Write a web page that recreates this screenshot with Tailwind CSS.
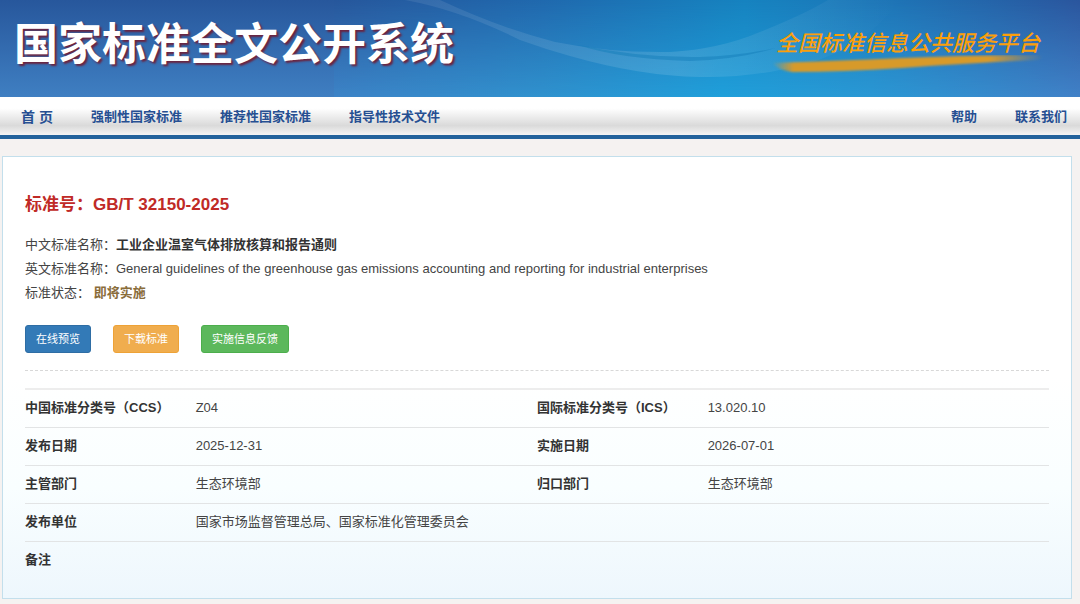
<!DOCTYPE html>
<html lang="zh-CN">
<head>
    <meta charset="UTF-8">
    <meta name="viewport" content="width=device-width, initial-scale=1.0">
    <title>国家标准全文公开系统</title>
    <script src="https://cdn.jsdelivr.net/npm/@tailwindcss/browser@4"></script>
</head>
<body class="bg-[#f5f2f1] min-h-screen font-['Liberation_Sans','Noto_Sans_CJK_SC',sans-serif] text-[13px] leading-6 text-[#444]">

    <!-- 页头 -->
    <header class="relative h-[97px] overflow-hidden">
        <svg class="absolute inset-0 w-full h-full" viewBox="0 0 1080 97" preserveAspectRatio="none" aria-hidden="true">
            <defs>
                <linearGradient id="left" x1="0" y1="0" x2="0" y2="1">
                    <stop offset="0" stop-color="#27579c"/>
                    <stop offset="1" stop-color="#3f7fc2"/>
                </linearGradient>
                <linearGradient id="top" x1="0" y1="0" x2="1" y2="0">
                    <stop offset="0" stop-color="#27579c"/>
                    <stop offset="0.28" stop-color="#2069ae"/>
                    <stop offset="0.55" stop-color="#1683c0"/>
                    <stop offset="0.75" stop-color="#1e74b6"/>
                    <stop offset="1" stop-color="#2b569e"/>
                </linearGradient>
                <linearGradient id="bottom" x1="0" y1="0" x2="1" y2="0">
                    <stop offset="0" stop-color="#3d84c7"/>
                    <stop offset="0.28" stop-color="#3092ce"/>
                    <stop offset="0.52" stop-color="#209fda"/>
                    <stop offset="0.72" stop-color="#2a98d4"/>
                    <stop offset="1" stop-color="#4181c7"/>
                </linearGradient>
                <linearGradient id="fade" x1="0" y1="0" x2="0" y2="1">
                    <stop offset="0" stop-color="#fff" stop-opacity="0"/>
                    <stop offset="1" stop-color="#fff"/>
                </linearGradient>
                <mask id="down"><rect width="1080" height="97" fill="url(#fade)"/></mask>
                <linearGradient id="wave" x1="0" y1="0" x2="1" y2="0">
                    <stop offset="0" stop-color="#fff" stop-opacity="0.08"/>
                    <stop offset="0.55" stop-color="#fff" stop-opacity="0.12"/>
                    <stop offset="1" stop-color="#fff" stop-opacity="0"/>
                </linearGradient>
            </defs>
            <rect width="334" height="97" fill="url(#left)"/>
            <rect x="334" width="746" height="97" fill="url(#top)"/>
            <g mask="url(#down)"><rect x="334" width="746" height="97" fill="url(#bottom)"/></g>
            <path d="M405 0H440Q500 28 555 42Q610 53 670 52Q720 49 760 32Q805 14 828 0H900Q860 56 780 70Q740 78 700 77Q640 76 570 56Q545 49 520 40Q460 10 405 0Z" fill="url(#wave)"/>
            <path d="M578 45Q640 58 700 57Q740 56 775 48Q740 59 690 61Q620 59 578 45Z" fill="#147db9" fill-opacity="0.5"/>
        </svg>
        <div class="relative flex h-full items-center justify-between pl-[14px] pr-[36px]">
            <h1 class="pb-2 text-[44px] leading-[60px] font-bold text-white [text-shadow:2px_2px_2px_#6b2440]">国家标准全文公开系统</h1>
            <div class="flex flex-col pt-1 text-[#fb9f0b]">
                <p class="px-1 font-['Noto_Sans_CJK_SC',sans-serif] text-[22px] leading-7 font-medium italic">全国标准信息公共服务平台</p>
                <svg class="h-5 w-full" viewBox="0 0 272 20" preserveAspectRatio="none" aria-hidden="true">
                    <defs>
                        <linearGradient id="brush" x1="0" y1="0" x2="1" y2="0">
                            <stop offset="0" stop-color="#d79a2c" stop-opacity="0"/>
                            <stop offset="0.08" stop-color="#d79a2c"/>
                            <stop offset="0.8" stop-color="#d79a2c"/>
                            <stop offset="1" stop-color="#d79a2c" stop-opacity="0"/>
                        </linearGradient>
                        <filter id="soft" x="-5%" y="-30%" width="110%" height="160%"><feGaussianBlur stdDeviation="1"/></filter>
                    </defs>
                    <path d="M0 8Q60 6 130 3Q200 0 270 0Q272 4 266 5Q200 8 130 13Q70 17 20 17Q6 15 0 8Z" fill="url(#brush)" filter="url(#soft)"/>
                </svg>
            </div>
        </div>
    </header>

    <!-- 导航 -->
    <nav class="flex h-[42px] items-center justify-between border-b-4 border-[#22629c] bg-linear-to-b from-white from-30% via-[#dadada] via-75% to-[#f4f4f4] pt-0.5 pl-[21px] pr-[13px] font-bold text-[#264f92]">
        <div class="flex items-center gap-[38px]">
            <a href="#" class="text-sm">首 页</a>
            <a href="#">强制性国家标准</a>
            <a href="#">推荐性国家标准</a>
            <a href="#">指导性技术文件</a>
        </div>
        <div class="flex items-center gap-[38px]">
            <a href="#">帮助</a>
            <a href="#">联系我们</a>
        </div>
    </nav>

    <!-- 标准详情 -->
    <main class="mt-[17px] mr-2 mb-[3px] ml-[2px] border border-[#c3dfec] bg-linear-to-b from-white from-50% via-[#f9feff] via-75% to-[#eef7fd] px-[22px] pt-9 pb-[19px]">
        <h2 class="text-[17px] font-bold text-[#c02a26]">标准号：GB/T 32150-2025</h2>

        <div class="mt-4">
            <p>中文标准名称：<strong class="text-[#333]">工业企业温室气体排放核算和报告通则</strong></p>
            <p>英文标准名称：General guidelines of the greenhouse gas emissions accounting and reporting for industrial enterprises</p>
            <p>标准状态： <strong class="text-[#8a6d3b]">即将实施</strong></p>
        </div>

        <div class="mt-5 flex gap-[22px] text-[11px] leading-[26px] text-white">
            <button type="button" class="rounded-[3px] border border-[#2e6da4] bg-[#337ab7] px-2.5">在线预览</button>
            <button type="button" class="rounded-[3px] border border-[#eea236] bg-[#f0ad4e] px-2.5">下载标准</button>
            <button type="button" class="rounded-[3px] border border-[#4cae4c] bg-[#5cb85c] px-2.5">实施信息反馈</button>
        </div>

        <hr class="my-[17px] border-dashed border-[#d8d8d8]">

        <table class="w-full table-fixed border-collapse border-t-2 border-[#ededed] text-left">
            <colgroup>
                <col class="w-1/6">
                <col class="w-1/3">
                <col class="w-1/6">
                <col class="w-1/3">
            </colgroup>
            <tbody>
                <tr class="h-[38px]">
                    <th scope="row" class="text-[#333]">中国标准分类号（CCS）</th>
                    <td>Z04</td>
                    <th scope="row" class="text-[#333]">国际标准分类号（ICS）</th>
                    <td>13.020.10</td>
                </tr>
                <tr class="h-[38px] border-t border-[#e2e4e5]">
                    <th scope="row" class="text-[#333]">发布日期</th>
                    <td>2025-12-31</td>
                    <th scope="row" class="text-[#333]">实施日期</th>
                    <td>2026-07-01</td>
                </tr>
                <tr class="h-[38px] border-t border-[#e2e4e5]">
                    <th scope="row" class="text-[#333]">主管部门</th>
                    <td>生态环境部</td>
                    <th scope="row" class="text-[#333]">归口部门</th>
                    <td>生态环境部</td>
                </tr>
                <tr class="h-[38px] border-t border-[#e2e4e5]">
                    <th scope="row" class="text-[#333]">发布单位</th>
                    <td colspan="3">国家市场监督管理总局、国家标准化管理委员会</td>
                </tr>
                <tr class="h-[38px] border-t border-[#e2e4e5]">
                    <th scope="row" class="text-[#333]">备注</th>
                    <td colspan="3"></td>
                </tr>
            </tbody>
        </table>
    </main>

</body>
</html>
